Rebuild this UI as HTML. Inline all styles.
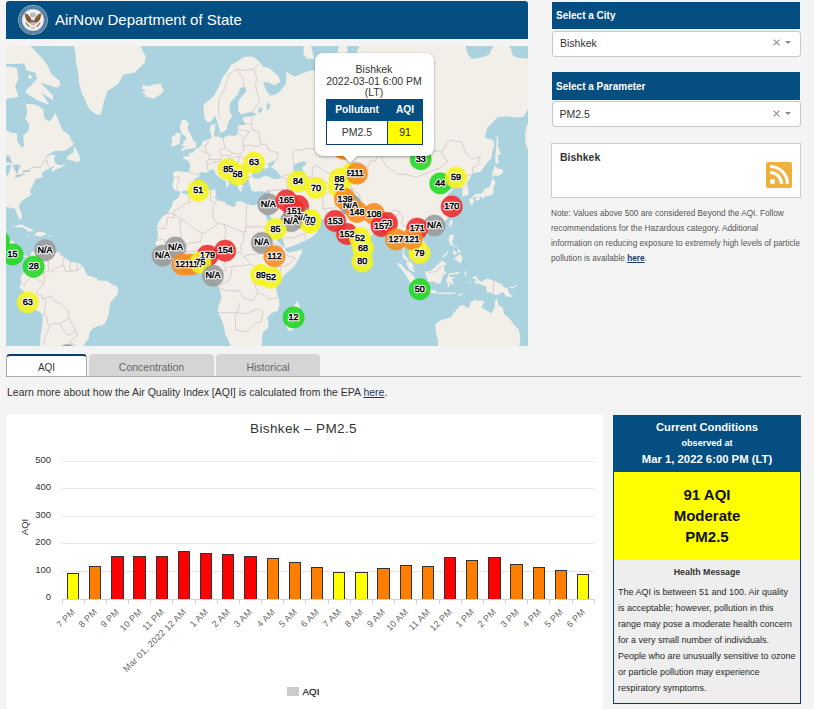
<!DOCTYPE html><html><head><meta charset="utf-8"><style>
html,body{margin:0;padding:0;width:814px;height:709px;overflow:hidden;background:#f4f4f4;font-family:"Liberation Sans", sans-serif;position:relative}
</style></head><body>
<div style="position:absolute;left:6.0px;top:1.0px;width:522.0px;height:38.0px;background:#044e82;border-radius:3px 3px 0 0"></div>
<svg style="position:absolute;left:18px;top:4.8px" width="30" height="30" viewBox="0 0 30 30">
<circle cx="15" cy="15" r="14.9" fill="#8fb8a6"/>
<circle cx="15" cy="15" r="14" fill="#3f6aa3"/>
<circle cx="15" cy="15" r="12.6" fill="none" stroke="#9ab4d4" stroke-width="1.6" stroke-dasharray="0.9 0.9" opacity="0.7"/>
<circle cx="15" cy="15" r="11.2" fill="#a9c4d6"/>
<circle cx="15" cy="15" r="10.6" fill="#f1efe6"/>
<ellipse cx="15" cy="9.8" rx="3" ry="2.4" fill="#a9bfcf"/>
<path d="M6.6 8.2 Q8.2 8.6 9.6 9.2 L11.8 11.5 L13.6 14.8 L13 18.6 Q9.6 17.6 8 14.2 Q7 11.5 6.6 8.2 Z" fill="#7d5635"/>
<path d="M23.4 8.2 Q21.8 8.6 20.4 9.2 L18.2 11.5 L16.4 14.8 L17 18.6 Q20.4 17.6 22 14.2 Q23 11.5 23.4 8.2 Z" fill="#7d5635"/>
<path d="M8 9.5 L10.5 13 M9 9 L11.5 12.5" stroke="#b08a60" stroke-width="0.4"/>
<path d="M22 9.5 L19.5 13 M21 9 L18.5 12.5" stroke="#b08a60" stroke-width="0.4"/>
<path d="M8 17 Q9.5 20 12 21 L11 22 Q8.5 20.5 7.5 18 Z" fill="#5f7a45"/>
<path d="M22 17 Q20.5 20 18 21 L19 22 Q21.5 20.5 22.5 18 Z" fill="#8a6a40"/>
<circle cx="15" cy="13.5" r="1.6" fill="#e8e4da"/>
<path d="M12.6 15.4 L17.4 15.4 L17.4 19.3 Q15 22.2 12.6 19.3 Z" fill="#d98080"/>
<path d="M13.4 17 V20.2 M14.6 17 V21.3 M15.8 17 V21.3 M17 17 V20" stroke="#f4e8e0" stroke-width="0.5"/>
<rect x="12.6" y="15.4" width="4.8" height="1.7" fill="#4a5a8a"/>
<path d="M13 22.5 Q15 24 17 22.5" stroke="#9a8a6a" stroke-width="0.8" fill="none"/>
</svg>
<div style="position:absolute;left:55.0px;top:11.80px;font-size:15.00px;line-height:15.00px;font-weight:normal;color:#fff;white-space:nowrap;">AirNow Department of State</div>
<div style="position:absolute;left:6px;top:46px;width:522px;height:300px;overflow:hidden"><svg width="522" height="300" viewBox="0 0 522 300" style="position:absolute;left:0;top:0">
<rect width="522" height="300" fill="#aad3df"/>
<g fill="#f2efe9" stroke="none">
<polygon points="-26.6,68.0 -26.6,34.4 -16.0,20.6 2.6,20.6 10.5,21.8 12.6,31.6 9.2,40.8 12.6,50.8 3.7,52.2 -9.6,56.9 -16.0,72.2 -10.6,80.3 -1.0,83.4 5.4,86.8 11.1,87.5 11.3,95.2 15.0,101.1 18.2,100.4 17.1,89.8 22.4,84.9 23.3,78.3 19.2,73.1 21.4,65.9 19.9,57.9 27.8,58.3 33.1,60.6 37.4,63.7 38.4,72.2 42.7,75.5 45.9,73.1 49.3,66.7 53.4,77.1 56.6,84.2 63.0,88.7 65.1,93.4 67.9,98.0 64.9,100.7 58.7,104.8 49.5,104.8 44.8,107.1 40.6,109.7 36.3,114.2 34.8,115.8 38.4,112.6 45.0,108.4 49.3,109.4 48.0,112.6 48.5,115.1 50.0,118.2 56.1,119.5 58.7,117.3 59.1,118.5 55.5,121.6 51.2,122.8 46.5,125.7 45.5,123.1 49.3,120.4 45.7,121.0 42.7,122.8 38.4,124.9 35.9,127.2 36.1,131.0 37.4,130.4 37.4,131.2 33.3,132.1 29.3,133.5 28.8,134.4 28.6,136.3 26.9,138.8 26.1,139.9 25.0,143.4 23.9,144.2 25.4,148.4 23.5,150.0 20.7,151.8 18.2,153.6 15.0,156.1 13.0,159.4 13.3,162.1 15.0,165.8 16.0,170.3 15.2,173.4 13.7,173.7 12.2,169.9 10.3,167.5 10.1,164.3 7.9,162.1 6.4,162.1 4.5,162.6 2.2,160.9 -1.0,160.9 -4.2,161.4 -3.8,164.3 -7.4,163.6 -13.8,163.1 -21.3,167.9 -21.3,176.2 -21.3,182.0 -18.1,187.7 -14.9,189.5 -9.6,188.6 -6.4,186.1 -5.9,183.2 -1.0,182.0 1.1,182.0 0.0,185.4 -0.4,189.3 -1.7,190.8 -1.7,194.4 1.1,194.9 6.4,194.6 9.0,196.6 8.6,201.0 8.1,205.4 9.6,207.6 11.8,209.7 13.9,209.7 17.1,208.4 20.7,209.9 22.0,210.6 22.9,211.2 24.6,209.7 25.4,206.3 28.2,205.2 30.3,204.7 33.3,202.3 34.6,203.6 33.3,204.3 33.7,206.5 36.9,204.1 37.8,204.5 41.2,206.3 45.5,206.3 49.7,206.5 53.4,206.0 54.6,206.5 53.2,207.6 57.0,210.8 59.1,211.2 62.3,214.2 64.7,216.2 69.4,216.2 72.6,217.0 75.8,219.4 77.5,220.5 79.0,224.7 80.0,226.9 81.1,229.0 83.2,230.1 85.4,230.3 91.1,232.4 92.2,234.5 97.1,234.8 102.4,235.4 106.7,239.0 111.0,240.1 112.0,244.0 111.6,248.3 107.8,252.6 104.4,257.0 103.5,261.4 102.9,268.0 101.4,272.1 99.2,277.1 96.0,279.4 91.3,280.1 86.4,282.9 83.2,286.7 83.0,291.7 80.5,294.9 78.3,298.6 75.8,301.6 73.6,306.2 73.6,322.2 26.7,322.2 34.2,306.2 34.2,296.1 34.6,288.9 36.3,279.4 36.7,268.7 33.1,265.8 26.1,262.0 23.9,258.1 21.8,254.1 19.2,248.3 16.7,244.0 13.5,241.8 14.1,239.0 15.4,236.3 14.3,233.3 16.0,227.9 18.6,225.8 21.4,223.7 21.8,220.5 21.4,215.1 19.4,211.0 16.7,210.2 15.0,211.9 13.5,213.0 10.7,211.2 7.9,210.2 4.1,208.0 3.7,205.4 0.5,201.2 -2.1,200.6 -7.4,199.1 -10.6,197.7 -16.0,194.4 -26.6,192.2"/>
<polygon points="0.2,-6.3 25.0,0.3 31.8,7.8 37.6,13.7 42.1,20.6 45.5,28.2 53.2,34.4 54.4,38.7 51.0,41.8 34.2,36.5 43.1,45.4 46.5,48.8 47.6,54.6 35.2,46.4 42.1,56.5 43.1,58.8 31.8,54.6 23.9,49.8 19.4,46.4 20.5,43.3 25.0,39.7 30.8,33.3 29.7,27.1 20.5,24.2 18.4,17.5 9.2,18.1 -11.1,18.1 -11.1,-6.3"/>
<polygon points="21.8,29.9 23.9,28.2 26.3,31.1 23.9,33.3"/>
<polygon points="67.2,-1.9 69.4,7.2 70.0,16.9 72.6,28.8 72.8,36.0 75.8,47.4 77.9,51.3 81.1,59.2 84.1,64.1 89.6,68.0 93.0,68.9 95.0,67.6 96.0,63.7 98.2,54.6 101.4,44.9 106.5,41.8 112.0,38.1 117.4,28.8 129.1,26.5 133.4,21.8 138.7,16.9 139.8,10.5 134.4,0.3 139.8,0.3 144.0,-3.3 148.3,-18.8 58.7,-46.4"/>
<polygon points="135.5,42.3 137.6,38.7 140.8,40.2 147.9,38.7 154.7,37.6 155.8,41.3 157.9,44.4 154.7,48.4 150.4,50.8 146.8,52.7 141.9,50.8 138.3,50.8 139.8,48.4 135.5,45.9 139.8,44.4"/>
<polygon points="60.2,113.2 63.0,108.8 67.2,107.1 68.3,100.1 72.6,107.8 74.3,113.6 72.4,116.4 67.7,115.1 61.9,113.6"/>
<polygon points="5.6,181.1 11.8,179.3 15.0,178.3 21.4,181.3 25.4,183.2 28.4,185.0 22.0,185.7 20.7,183.8 17.1,181.8 12.8,181.3 9.6,180.9"/>
<polygon points="28.0,189.1 31.4,185.7 37.4,186.1 40.8,188.6 37.4,189.5 34.2,190.8 31.0,190.0"/>
<polygon points="19.7,189.1 23.9,189.5 22.6,190.4"/>
<polygon points="43.3,188.8 46.8,189.3 43.3,190.2"/>
<polygon points="174.5,105.1 177.7,104.5 180.3,103.1 184.6,102.8 189.7,101.4 190.3,96.6 187.3,95.2 186.7,93.0 185.6,89.8 183.5,86.8 182.2,84.2 181.4,81.8 182.9,78.3 179.9,73.9 176.0,73.9 174.8,78.3 173.5,81.1 175.0,85.3 176.0,88.3 179.2,89.8 180.3,92.0 179.9,94.1 176.7,95.9 177.7,97.6 175.6,99.4 179.9,100.7 177.1,101.4"/>
<polygon points="173.9,98.0 173.9,92.0 175.0,89.8 173.5,87.2 170.7,86.8 168.6,89.4 165.4,90.9 166.4,95.2 164.7,99.0 166.4,100.4 169.6,99.4 173.3,98.0"/>
<polygon points="197.4,59.2 201.6,55.5 208.0,49.8 213.4,39.7 216.6,31.6 220.8,25.9 225.1,18.7 231.5,15.6 237.9,11.1 242.2,10.5 247.5,11.1 252.8,15.0 257.1,20.6 263.5,22.4 272.0,29.4 274.6,35.5 268.8,39.2 260.9,36.0 257.1,36.5 260.3,44.9 264.6,49.8 272.0,47.4 279.5,38.7 280.6,28.8 279.5,25.3 284.8,28.8 289.1,30.5 299.8,25.9 310.4,23.6 314.7,18.1 327.5,21.2 329.6,13.7 332.8,0.3 336.0,-7.0 341.4,0.3 342.4,25.9 345.6,28.8 348.8,10.5 353.1,0.3 378.7,-27.4 421.4,-27.4 427.8,-7.0 442.7,-3.3 451.2,-8.5 455.5,-7.0 459.8,0.3 461.9,8.5 466.2,13.1 472.6,11.8 479.0,10.5 483.2,8.5 487.5,-0.4 491.8,-3.3 500.3,-1.9 504.6,1.7 506.7,9.2 511.0,11.8 521.6,12.4 528.0,16.9 538.7,20.0 538.7,105.5 521.0,102.1 519.5,96.9 519.1,87.9 520.6,80.3 523.8,74.3 527.0,65.9 522.1,62.8 517.4,71.0 511.0,71.4 502.4,70.6 491.8,71.0 486.9,76.3 481.1,82.2 479.0,91.6 475.8,90.5 487.5,94.5 488.3,98.7 486.4,105.5 485.4,112.0 481.1,116.7 474.7,125.7 468.3,126.9 465.5,129.2 463.4,132.9 460.8,137.1 462.7,146.6 462.3,148.7 456.6,150.8 456.1,147.9 456.8,142.6 453.4,141.2 452.5,136.3 447.0,138.5 445.3,139.1 448.0,134.4 444.8,133.2 441.6,136.3 438.0,138.5 439.5,141.2 440.6,143.4 448.2,142.9 443.8,146.3 441.0,150.0 444.6,155.6 446.7,159.4 445.9,161.4 447.0,163.1 443.8,169.1 441.6,172.7 436.3,177.4 429.9,180.2 423.5,182.0 421.8,184.8 420.5,181.8 417.1,182.0 413.9,184.8 412.2,187.9 415.0,192.2 418.8,196.0 419.9,202.1 419.0,204.7 415.0,206.9 414.3,208.6 410.7,210.6 410.3,206.7 406.4,206.0 405.4,202.8 401.9,201.7 401.1,199.9 398.3,203.2 398.5,209.1 400.7,211.4 402.8,214.5 405.4,216.2 407.3,219.4 407.5,223.7 409.0,226.0 407.5,226.2 402.8,223.0 400.7,218.3 400.5,215.1 396.8,211.4 396.4,206.5 397.0,201.0 394.9,193.3 391.5,193.7 388.1,194.4 387.7,188.4 385.1,185.4 383.6,183.2 382.5,180.2 379.8,180.9 376.6,181.6 372.3,182.0 371.2,185.4 367.6,187.3 362.3,193.3 359.5,196.0 357.8,201.0 356.9,206.9 354.2,209.7 352.0,211.7 349.5,208.2 347.6,203.2 345.0,197.1 343.1,191.1 342.0,187.7 341.6,182.5 340.9,180.4 336.9,183.6 333.7,180.2 336.0,179.0 332.8,177.4 330.7,176.7 329.6,174.4 328.6,172.9 324.3,173.4 318.1,173.4 313.6,172.9 308.9,172.0 307.2,168.9 306.8,170.6 307.0,175.1 312.1,177.4 314.3,179.7 310.0,187.7 304.0,192.2 297.6,195.5 290.2,198.8 282.7,201.5 279.5,201.7 279.1,204.3 282.7,206.5 291.2,204.7 296.1,203.6 295.9,206.5 292.9,211.9 289.1,219.4 284.8,223.7 279.5,227.9 275.2,233.3 272.0,236.5 269.9,240.8 270.5,246.1 273.1,252.6 273.3,259.2 272.0,264.7 265.6,266.9 260.9,272.1 262.2,274.8 262.4,281.8 256.9,286.2 256.0,292.5 255.0,322.2 225.1,322.2 225.1,301.1 221.9,292.7 219.3,288.9 217.6,279.0 211.9,265.8 212.7,259.2 215.5,252.6 214.4,246.1 212.3,239.7 209.1,235.4 205.5,231.1 206.5,229.0 207.6,223.7 207.0,220.9 204.8,219.4 199.5,219.8 196.3,215.7 192.0,215.5 188.8,216.2 182.4,218.7 178.2,217.9 170.7,219.6 167.5,218.3 162.2,214.0 159.0,211.4 157.5,208.6 155.8,206.5 153.6,204.3 151.1,203.2 150.9,199.9 149.4,197.3 151.5,193.3 151.9,186.6 150.4,182.5 152.6,176.2 155.8,171.5 158.5,169.1 162.2,166.3 165.8,160.6 166.9,155.6 172.2,151.8 174.1,147.1 173.3,145.3 167.9,143.9 166.4,139.3 167.9,132.9 166.9,127.2 169.6,125.1 178.6,126.0 183.5,125.7 184.1,118.2 182.0,114.8 177.7,112.6 176.7,110.7 183.5,110.0 182.6,106.5 183.9,107.1 187.1,106.5 190.1,102.4 192.0,101.8 195.2,99.4 196.9,95.2 201.6,93.8 205.7,92.0 205.0,88.3 204.0,85.7 204.2,79.9 209.3,77.5 208.9,83.0 207.8,88.7 210.0,91.6 212.3,88.7 214.2,86.4 213.4,82.2 210.6,74.3 209.5,70.1 204.8,75.5 201.6,76.3 198.4,72.2 197.8,65.9"/>
<polygon points="213.2,141.0 220.0,140.4 218.9,144.7 213.2,142.3"/>
<polygon points="204.2,132.9 207.6,132.9 207.2,138.5 204.6,138.5"/>
<polygon points="205.0,127.2 207.0,127.5 207.0,131.8 205.0,130.7"/>
<polygon points="236.8,147.9 242.8,148.4 242.2,149.2 236.8,148.7"/>
<polygon points="255.6,149.2 260.5,147.4 258.8,150.2 255.8,150.0"/>
<polygon points="356.9,208.0 359.5,210.8 361.4,213.6 360.8,215.7 358.4,216.4 357.2,214.5 356.9,210.8"/>
<polygon points="291.9,254.8 294.2,262.5 292.9,265.8 290.2,273.7 287.2,283.9 283.1,285.3 280.1,280.6 279.3,276.0 281.4,272.1 280.6,265.8 285.9,262.9 289.1,258.3"/>
<polygon points="465.9,151.8 469.4,147.9 475.8,147.6 478.5,143.1 483.2,141.2 485.4,135.8 486.4,132.4 488.6,134.4 489.6,137.1 487.5,140.4 487.5,144.7 487.1,147.4 484.9,149.2 482.6,150.0 479.0,150.2 476.8,153.1 474.7,150.5 469.4,151.0 466.6,152.1"/>
<polygon points="463.2,153.1 466.6,152.1 468.3,154.9 466.2,158.9 464.5,158.9 463.6,154.9"/>
<polygon points="468.9,153.8 471.5,151.0 474.1,151.3 473.6,153.3 470.4,155.1"/>
<polygon points="485.4,131.8 486.4,126.6 489.0,120.1 491.8,122.5 496.7,123.4 497.3,126.3 492.8,130.1 487.9,129.2"/>
<polygon points="489.6,118.2 492.8,116.7 491.8,108.8 495.0,108.8 492.2,100.4 492.2,90.9 490.7,90.5 490.1,102.1 489.2,112.0"/>
<polygon points="442.9,178.6 444.2,180.9 445.9,178.1 447.0,173.9 444.8,173.7"/>
<polygon points="418.4,187.7 421.6,185.2 423.5,186.3 421.6,189.5 418.6,188.8"/>
<polygon points="444.0,188.8 447.4,188.8 447.8,192.2 445.9,195.5 447.0,198.8 451.2,201.0 451.2,202.1 448.0,199.9 444.8,199.3 443.8,197.7 442.3,193.7"/>
<polygon points="447.0,214.0 450.2,210.8 454.4,208.0 456.6,211.9 455.5,216.2 454.0,217.0 451.2,215.1 448.7,213.2"/>
<polygon points="451.7,202.1 454.9,205.4 453.4,207.6 451.9,205.4"/>
<polygon points="447.0,203.6 449.5,205.4 451.2,206.0 450.2,208.6 448.0,209.1 447.0,206.5"/>
<polygon points="436.7,211.0 441.6,204.7 442.1,206.5 438.2,211.2"/>
<polygon points="419.2,225.8 420.5,224.7 423.5,225.4 427.8,222.2 431.0,219.0 434.2,216.2 436.7,214.0 437.8,216.0 441.0,217.7 438.4,219.4 438.0,224.7 440.6,226.9 437.4,228.8 436.3,232.2 435.2,235.4 434.2,237.3 431.0,237.5 427.8,235.6 424.6,235.8 421.8,235.2 421.4,232.2 419.7,230.1"/>
<polygon points="390.0,217.0 394.7,217.9 400.0,223.7 403.2,225.4 407.5,230.1 409.6,232.8 412.8,235.4 412.4,241.4 409.6,241.6 404.9,237.5 401.1,231.6 397.3,225.4 394.1,221.7"/>
<polygon points="411.1,243.5 413.9,241.8 417.7,242.5 422.4,243.5 426.7,243.8 431.0,245.5 431.0,247.6 425.6,246.8 419.2,245.7 413.9,244.8"/>
<polygon points="432.0,246.6 440.6,246.6 449.1,246.6 449.1,247.8 440.6,248.1 432.0,247.8"/>
<polygon points="451.2,250.0 454.4,247.4 458.3,247.0 453.8,249.6"/>
<polygon points="441.6,240.8 441.4,236.5 440.1,234.5 442.3,229.0 443.1,227.3 447.0,226.9 453.4,225.8 452.3,228.1 444.8,228.4 443.3,231.1 445.9,231.1 449.7,231.6 445.9,232.8 448.0,238.6 444.8,237.5 443.8,235.0 443.5,241.0"/>
<polygon points="458.7,225.2 460.8,225.8 459.8,227.9 460.8,230.7 458.9,229.6"/>
<polygon points="459.8,235.8 465.7,236.3 463.0,236.7"/>
<polygon points="466.2,232.0 469.4,229.9 474.7,236.0 481.1,232.4 487.5,234.5 496.0,238.2 498.2,241.6 501.4,241.8 502.4,246.1 506.7,251.1 500.3,250.4 497.1,246.1 492.8,248.3 490.7,248.9 487.5,248.5 484.3,246.1 481.1,247.0 480.2,240.8 472.6,237.5 470.0,237.5 468.3,235.0 471.5,233.7 467.2,232.8"/>
<polygon points="503.5,240.8 507.8,240.8 511.0,238.0 510.5,240.1 506.7,242.5 503.5,241.8"/>
<polygon points="429.3,278.3 435.2,273.9 444.8,271.4 447.6,266.9 450.2,264.3 453.4,260.3 457.6,258.7 460.2,261.4 463.4,261.2 464.0,257.0 466.2,255.2 469.4,253.7 470.4,254.4 476.8,254.8 478.5,255.2 476.8,258.1 475.8,261.4 480.0,264.3 485.4,267.4 488.6,261.4 488.8,255.9 490.7,252.0 492.8,259.2 496.7,261.4 498.2,268.0 504.1,273.2 507.8,278.3 513.1,284.1 514.4,292.5 513.1,301.1 513.1,322.2 429.9,322.2 432.0,303.6 432.0,293.7 429.9,286.5"/>
<polygon points="297.6,8.5 300.8,12.4 308.3,13.1 305.1,0.3 308.3,-10.8 297.6,-3.3"/>
</g><g fill="#aad3df">
<polygon points="174.8,146.6 177.1,144.7 182.0,144.7 185.6,142.3 187.1,139.1 186.1,137.1 188.6,132.9 193.5,130.4 193.3,126.9 196.3,126.0 200.6,126.9 203.1,124.9 205.5,123.1 208.5,124.6 209.1,127.5 210.6,128.9 213.6,131.8 216.6,133.5 220.0,135.5 220.2,138.8 220.0,141.2 221.0,141.2 222.1,140.2 223.4,137.4 222.1,135.8 223.4,134.4 226.2,135.5 225.1,133.8 220.8,131.5 217.6,129.8 215.7,125.7 212.9,122.5 212.9,120.1 215.9,119.1 215.7,121.0 217.2,120.4 219.1,123.4 220.6,125.7 224.0,127.2 226.4,128.9 228.1,130.7 228.1,134.6 229.8,137.1 230.9,139.1 231.9,140.4 232.8,143.7 233.4,144.5 234.7,145.5 236.2,145.5 235.3,142.6 236.4,141.2 237.9,140.7 235.1,137.7 236.4,136.0 235.1,134.4 237.5,134.6 238.8,133.2 242.2,133.5 242.8,134.9 243.4,137.7 243.9,139.9 245.2,141.8 244.9,143.9 246.9,144.7 249.6,146.1 252.0,145.0 255.0,145.3 259.4,146.1 260.9,144.5 263.7,144.2 263.3,147.6 262.6,151.3 261.2,155.6 259.7,158.6 255.6,158.9 251.8,158.1 247.5,159.6 241.1,157.9 235.8,155.6 231.5,154.9 229.4,157.4 229.4,159.9 227.2,161.1 224.0,159.4 219.8,157.9 219.1,156.1 214.4,154.9 211.2,153.8 208.5,151.8 210.2,148.4 209.1,145.3 210.2,143.7 208.0,143.4 203.8,144.2 197.4,144.5 191.0,145.0 184.6,147.4 181.4,148.7 175.4,146.8"/>
<polygon points="246.4,130.4 246.2,126.6 247.9,123.4 250.1,120.7 252.2,117.0 254.5,116.4 257.5,117.9 256.0,120.1 258.2,122.8 260.3,122.5 262.4,121.0 264.6,120.4 266.7,122.2 268.8,123.4 271.8,126.0 275.4,131.2 272.0,132.9 267.8,133.2 263.5,131.0 261.4,130.1 257.1,130.4 253.9,132.4 248.8,132.4"/>
<polygon points="261.4,120.1 262.4,117.3 268.2,114.5 268.8,116.4 266.7,119.8 264.6,120.4"/>
<polygon points="287.4,122.8 287.0,120.4 288.2,118.8 290.8,117.6 292.3,117.0 295.9,115.4 299.3,115.4 300.2,117.6 298.7,119.5 296.6,120.7 295.9,122.8 298.7,127.8 299.1,132.4 301.5,133.8 299.6,136.0 301.7,143.1 295.1,143.9 291.2,142.1 291.7,137.7 293.2,134.1 291.4,132.1 288.0,127.2 287.4,123.7"/>
<polygon points="214.2,86.4 217.2,86.0 220.8,83.0 221.9,77.1 226.2,70.6 223.4,64.6 223.8,57.9 227.0,53.2 231.9,48.4 234.3,41.8 239.0,40.8 240.7,44.9 238.3,47.4 232.6,54.6 232.1,65.0 235.3,68.5 241.1,66.7 246.4,65.9 251.1,68.5 246.6,70.1 236.8,71.4 236.8,74.7 238.5,75.5 238.3,79.5 233.6,78.3 231.7,81.1 231.7,85.3 231.9,87.2 229.4,89.8 226.4,90.1 223.0,89.0 217.0,92.0 212.5,90.9 212.3,88.7"/>
<polygon points="256.0,162.1 258.2,166.7 260.3,171.5 263.1,176.7 266.1,183.2 268.8,190.0 271.6,195.5 275.2,198.8 279.1,202.1 277.8,196.6 276.3,192.2 273.7,186.6 270.3,182.0 268.8,176.7 266.1,172.7 262.4,167.5 261.2,163.1 259.9,166.7 257.7,165.5"/>
<polygon points="289.1,161.9 293.4,161.6 296.1,166.7 303.0,170.1 306.8,168.9 307.0,171.1 305.7,173.4 301.9,176.0 297.6,176.5 296.6,174.8 296.6,171.5 295.1,172.7 293.6,170.3 291.7,167.9 290.0,165.5"/>
<polygon points="-9.6,116.1 -3.2,112.0 -1.0,109.4 3.2,109.4 6.4,116.7 1.1,116.7"/>
<polygon points="-0.6,130.1 -0.6,124.3 -1.0,119.8 5.4,118.2 4.3,122.8 2.2,128.7"/>
<polygon points="6.4,119.8 11.8,118.2 15.0,119.8 12.8,122.8 11.1,127.2 8.6,124.3"/>
<polygon points="8.6,131.2 12.8,131.5 18.2,127.8 15.0,128.4 10.7,129.2"/>
<polygon points="16.5,126.3 24.1,125.7 23.5,123.7 17.5,125.1"/>
<polygon points="251.8,65.9 253.9,60.6 256.7,63.7 253.9,67.2"/>
<polygon points="260.3,63.7 261.4,56.0 264.6,59.2 262.4,63.7"/>
<polygon points="408.1,100.1 411.8,96.9 417.1,94.1 420.5,85.3 419.2,84.5 415.0,93.0 410.3,98.7 407.9,99.4"/>
<polygon points="343.5,118.2 347.8,115.8 355.2,116.7 355.2,118.2 347.8,117.3 344.6,118.8"/>
<polygon points="341.4,0.3 342.4,25.9 345.6,28.8 348.8,10.5 353.1,0.3"/>
</g>
<g fill="none" stroke="#a88ba6" stroke-opacity="0.5" stroke-width="0.7" stroke-linejoin="round">
<polyline points="182.0,148.9 183.1,153.1 184.1,156.6 178.8,157.9 176.5,160.6 168.1,164.6 168.1,167.5"/>
<polyline points="158.5,167.5 168.1,167.5"/>
<polyline points="168.1,168.4 168.1,171.5 161.1,171.5 161.1,177.4 159.0,182.5 150.4,182.5"/>
<polyline points="168.1,168.4 176.5,173.9 189.3,183.2 193.7,185.9 195.7,187.3"/>
<polyline points="176.5,173.9 173.9,174.1 175.0,193.3 162.2,195.5 160.7,197.3 162.4,202.3 167.5,203.0 169.6,206.5 170.7,210.8 169.0,213.0 170.7,219.6"/>
<polyline points="151.3,194.0 156.8,193.3 160.7,197.3"/>
<polyline points="151.1,202.3 157.5,201.9 162.4,202.3"/>
<polyline points="158.3,209.7 161.1,207.6 164.3,208.6 162.8,211.2 164.3,214.2"/>
<polyline points="195.7,187.3 199.1,186.8 212.1,177.4 208.0,173.9 207.0,170.3 207.0,161.4 208.5,157.6 204.8,154.9 204.4,150.2 205.0,144.2"/>
<polyline points="208.5,157.6 211.2,154.1"/>
<polyline points="240.5,157.9 240.0,180.9 265.4,180.9"/>
<polyline points="212.1,177.4 218.7,178.6 237.9,186.6 237.9,185.4 240.0,185.4 240.0,180.9"/>
<polyline points="218.7,178.6 219.8,184.3 219.8,190.0 215.7,199.5 213.4,200.8 208.0,200.4 201.6,201.0 195.7,199.9 194.4,203.9 192.7,209.7 192.5,215.5"/>
<polyline points="237.9,186.6 237.7,195.3 234.7,198.8 235.3,203.2 233.6,205.8 226.2,210.2 219.8,213.0 217.6,219.4 220.8,224.7"/>
<polyline points="195.7,187.3 195.7,192.6 194.2,195.7 187.1,196.8 185.6,196.4 182.4,197.7 179.2,200.4 177.3,203.2 175.0,206.7"/>
<polyline points="215.7,199.5 217.6,202.1 215.5,207.6 212.3,211.9 209.1,215.1 205.5,219.2"/>
<polyline points="179.9,218.1 180.9,211.9 180.7,205.4 187.8,205.4 191.4,203.6 194.4,203.9"/>
<polyline points="189.3,216.0 187.8,205.4"/>
<polyline points="233.6,205.8 237.9,210.4 244.3,208.4 250.7,208.2 257.1,207.1 259.2,208.6 257.1,211.9 261.4,218.3 262.4,219.2 269.9,221.5 276.3,220.5 282.7,218.3 289.1,211.9 281.6,209.7 278.4,205.4"/>
<polyline points="268.8,190.0 264.6,198.2 261.4,206.5 259.2,208.6"/>
<polyline points="264.6,198.2 269.9,197.5 275.2,201.0 277.2,202.1"/>
<polyline points="276.1,220.5 274.2,223.0 274.2,232.6"/>
<polyline points="244.9,218.3 237.9,210.4"/>
<polyline points="220.8,221.5 227.2,220.2 234.7,220.0 244.9,218.3 250.7,221.5 250.1,231.8 248.8,238.6 251.8,246.6 246.4,254.8 237.9,252.6 233.2,244.6 220.8,245.0 212.9,241.8"/>
<polyline points="212.9,239.7 221.9,235.4 224.7,230.1 225.5,224.1 226.4,221.5"/>
<polyline points="207.6,224.1 210.8,224.3 215.1,224.3 220.8,224.7"/>
<polyline points="259.2,220.0 261.4,225.8 259.2,231.1 270.3,239.0"/>
<polyline points="250.7,231.1 259.2,231.1"/>
<polyline points="272.9,251.5 262.4,253.7 259.2,249.4 251.8,246.6"/>
<polyline points="233.6,257.0 231.1,266.9 211.9,266.5"/>
<polyline points="229.4,268.0 229.4,277.1 229.4,283.6 240.0,286.0 248.6,277.6 255.0,276.0 257.1,265.8 251.8,262.7 240.5,267.6 231.1,266.9"/>
<polyline points="263.5,146.8 265.0,144.5 268.2,144.2 273.1,143.7 276.9,143.4 282.3,143.4 281.2,140.4 281.2,136.9 279.7,134.4 277.6,131.5 275.4,131.5"/>
<polyline points="282.3,143.4 283.8,147.9 284.8,153.1 288.0,156.9 289.1,160.6 290.2,162.1"/>
<polyline points="276.9,143.4 274.8,150.5 269.5,153.3 270.3,156.4 265.6,158.1 267.8,161.1 264.6,163.1 261.4,163.3"/>
<polyline points="263.5,154.9 262.6,153.6"/>
<polyline points="270.3,156.4 276.3,159.1 282.1,163.8 285.9,164.1 289.1,165.5"/>
<polyline points="278.0,193.5 280.6,191.3 287.0,192.2 297.6,187.7 305.3,185.4 304.5,179.3 298.7,175.8 295.9,175.5"/>
<polyline points="297.6,187.7 300.0,193.1"/>
<polyline points="304.5,179.3 306.6,175.5"/>
<polyline points="301.7,143.1 308.3,141.2 315.6,145.0 317.3,147.6 316.4,151.0 317.7,158.6 316.6,162.4 320.7,166.0 318.5,171.8 318.1,173.4"/>
<polyline points="316.6,162.4 328.1,162.1 334.5,157.1 337.7,152.1 339.2,146.3 345.8,143.7"/>
<polyline points="317.3,147.6 321.3,147.1 324.9,143.7 331.3,143.4 336.0,142.3 339.2,141.5 346.5,143.4"/>
<polyline points="345.8,143.7 347.8,150.5 345.2,154.9 345.8,159.4 342.4,162.1 338.6,167.2 336.0,170.3 338.2,175.3 332.2,176.9"/>
<polyline points="346.5,143.4 352.7,147.9 355.7,155.6 354.8,158.9 357.8,161.1 359.7,161.9 365.9,165.3 374.6,167.0 377.6,166.5 383.0,167.2 388.9,163.8 394.3,166.3 396.2,169.1 396.8,173.9 395.1,176.5 399.0,180.6 402.6,182.5 404.7,179.9 410.7,178.1 414.3,179.0 417.1,182.0"/>
<polyline points="357.8,161.1 360.6,165.5 364.8,168.2 370.2,170.1 374.6,170.3 374.6,167.0"/>
<polyline points="374.6,170.3 376.6,171.1 383.0,173.7 384.2,180.9 376.6,180.9"/>
<polyline points="394.3,166.3 389.8,169.9 388.3,176.2 385.7,178.6 384.2,182.0"/>
<polyline points="402.6,182.5 400.2,184.5 396.8,186.1 395.3,189.7 397.0,194.4 398.1,206.9"/>
<polyline points="404.7,179.9 408.6,183.6 411.1,188.6 414.3,193.3 416.0,197.7 412.8,204.3 409.6,206.7"/>
<polyline points="400.2,184.5 402.8,190.6 405.8,190.2 410.3,193.3 411.8,198.2 406.4,198.2 405.4,202.8"/>
<polyline points="400.5,215.1 404.5,215.7"/>
<polyline points="288.0,119.1 287.0,112.0 285.9,108.8 290.8,103.8 295.5,103.8 303.0,102.1 306.2,103.1 311.5,102.8 317.9,100.4 316.8,95.2 317.9,91.6 325.4,89.4 333.9,86.8 338.2,91.2 343.5,93.4 349.9,90.9 353.1,96.9 361.6,102.1 368.0,107.1 372.9,108.4 374.0,108.1 378.7,103.5 384.0,103.1 394.7,105.5 396.8,98.7 404.3,100.7 412.8,104.5 418.2,107.4 429.9,104.8 435.7,106.1 441.6,96.9 444.8,94.1 455.5,95.9 459.8,107.1 466.2,112.9 474.3,110.7 471.5,119.8 466.2,121.9 467.2,128.7 465.5,129.2"/>
<polyline points="374.0,108.1 379.8,119.8 391.5,128.1 400.0,128.4 410.7,131.2 424.6,125.4 434.2,121.9 442.1,115.1 438.4,112.6 435.7,106.1"/>
<polyline points="372.9,108.4 369.1,115.1 363.8,115.1 362.7,120.4 357.4,121.3 357.8,127.8 357.8,130.1 348.8,134.4 343.7,137.4 346.5,143.4"/>
<polyline points="357.8,127.8 355.7,127.8 345.0,126.6 338.2,129.2 335.0,131.5 327.5,128.4 319.0,125.7 311.5,119.8 306.2,121.3 306.2,132.1 299.8,129.8"/>
<polyline points="306.2,132.1 315.8,132.4 319.8,136.0 326.4,142.6"/>
<polyline points="353.7,132.7 343.7,137.4 337.1,136.3 332.8,137.1 331.3,143.4"/>
<polyline points="338.2,129.2 339.2,132.9 342.4,133.5 343.7,137.4"/>
<polyline points="275.4,131.5 279.5,128.7 285.9,130.7 290.2,130.7"/>
<polyline points="279.5,132.7 282.7,132.4 285.9,132.7"/>
<polyline points="282.3,136.6 285.9,138.8 289.1,137.1 290.8,140.2"/>
<polyline points="465.5,129.2 461.9,128.7 459.8,130.4 456.6,131.5 451.9,135.8"/>
<polyline points="457.0,141.8 460.6,139.6"/>
<polyline points="420.5,224.7 423.5,226.9 427.8,225.8 431.0,225.8 433.1,221.5 437.4,220.0"/>
<polyline points="487.5,234.5 487.5,248.5"/>
<polyline points="213.4,72.2 212.3,63.7 213.4,52.2 218.7,42.3 223.0,28.8 230.4,23.0 236.8,31.6 238.1,40.8"/>
<polyline points="230.4,23.0 240.0,24.7 247.5,23.0 252.8,18.1"/>
<polyline points="247.5,23.0 250.7,31.6 249.6,39.7 251.8,49.8 253.9,55.5 246.0,65.9"/>
<polyline points="246.4,70.6 245.4,78.3 246.9,84.2 252.8,85.7 253.9,95.2 255.0,98.3 260.3,98.0 262.4,103.8 267.8,105.5 272.0,106.8 271.4,112.6 268.2,114.8"/>
<polyline points="233.2,77.9 244.9,77.9"/>
<polyline points="231.7,83.8 243.4,85.3 239.0,91.6 236.8,92.0 237.3,98.7 237.9,103.8 235.1,108.4"/>
<polyline points="235.3,90.1 231.5,86.8"/>
<polyline points="237.3,100.1 242.2,99.0 251.8,100.7 255.0,98.3"/>
<polyline points="217.0,92.0 217.8,96.6 218.7,102.1 222.5,104.5 226.8,107.1 230.4,107.4 235.1,108.4"/>
<polyline points="212.7,104.5 217.2,102.4 218.7,102.1"/>
<polyline points="212.7,104.5 216.1,109.4 214.4,113.6 209.1,113.6 207.2,113.6 202.9,113.2 204.2,108.8 200.4,107.1 199.7,102.8 199.5,99.4 201.6,98.0 202.1,94.5"/>
<polyline points="200.4,107.1 196.9,105.5 192.0,101.8"/>
<polyline points="195.9,100.7 199.5,99.4"/>
<polyline points="202.9,113.2 199.5,117.6 201.6,118.5 201.6,123.7 202.7,124.9"/>
<polyline points="182.9,126.0 188.2,127.8 193.5,128.9"/>
<polyline points="167.7,130.4 173.5,131.2 172.0,135.8 171.1,139.9 170.9,143.4"/>
<polyline points="201.6,118.5 204.8,117.0 209.1,116.7 212.7,115.1 215.9,116.7 215.9,119.5"/>
<polyline points="207.0,113.6 209.1,115.8"/>
<polyline points="216.1,109.4 218.7,108.8 222.8,110.0 223.2,112.0 221.9,116.7 215.9,116.7"/>
<polyline points="222.8,110.0 226.8,107.1"/>
<polyline points="223.2,112.0 226.8,112.6 230.4,110.4 234.1,110.7 231.5,117.6 227.2,118.5 223.0,118.8 221.9,116.7"/>
<polyline points="234.1,110.7 239.0,112.3 243.4,111.0 246.4,116.7 246.9,119.8 250.1,120.7"/>
<polyline points="243.4,111.0 247.5,111.3 250.7,116.7 246.9,119.8"/>
<polyline points="235.1,123.7 240.0,125.1 245.4,124.3 247.7,125.1"/>
<polyline points="231.5,117.6 230.0,119.1 232.6,122.2 235.1,123.7 234.5,129.2 237.9,131.5 242.8,131.0 246.4,130.1"/>
<polyline points="242.8,131.0 242.2,133.5"/>
<polyline points="230.4,136.3 231.5,133.2 235.8,132.1 237.9,131.5"/>
<polyline points="220.8,120.7 227.2,121.3 228.3,126.6 226.2,128.7"/>
<polyline points="220.4,121.9 223.0,125.7 226.2,128.7"/>
<polyline points="228.1,130.4 230.4,128.7 232.6,129.5 234.5,129.2"/>
<polyline points="230.4,128.7 230.6,132.9 230.4,136.3"/>
<polyline points="-4.2,112.0 -1.0,111.3 6.4,116.7 10.9,120.4 10.7,128.7 9.4,130.1 18.2,128.4 17.1,125.4 23.5,124.3 26.7,121.3 34.2,121.3 36.3,118.2 39.1,113.9 41.2,114.2 42.1,119.5 43.8,121.0"/>
<polyline points="-10.0,197.7 -9.6,194.4 -8.3,194.4 -6.4,194.2 -8.3,191.5 -3.6,190.4 -1.7,188.8"/>
<polyline points="-3.6,190.4 -3.6,194.6"/>
<polyline points="9.2,196.6 4.3,198.8 0.5,201.2"/>
<polyline points="8.1,205.6 3.9,205.2"/>
<polyline points="10.5,208.4 9.8,211.7"/>
<polyline points="21.6,210.4 20.5,213.6"/>
<polyline points="-3.8,198.0 -2.1,194.9"/>
<polyline points="-3.8,198.0 -0.4,199.3"/>
<polyline points="32.7,203.4 32.0,205.4 30.3,209.3 32.2,211.9 32.2,214.0 37.4,214.0 42.7,215.7 42.1,219.4 43.1,224.7 37.4,226.2 38.4,231.1 37.6,238.0"/>
<polyline points="18.6,226.0 22.4,228.4 26.1,229.2 29.9,232.2 37.4,238.0"/>
<polyline points="15.6,236.3 18.2,239.7 19.9,236.0 26.1,229.2"/>
<polyline points="58.7,210.8 56.6,217.2 57.6,219.4 52.3,220.9 49.1,222.6 44.2,226.4"/>
<polyline points="64.7,216.2 63.6,221.5 65.1,224.9"/>
<polyline points="71.5,216.8 71.1,224.5"/>
<polyline points="57.6,219.4 59.8,225.8 65.1,224.9 71.1,224.5 76.4,220.0"/>
<polyline points="37.6,238.0 31.0,244.6 31.4,248.9 36.1,249.4 36.1,252.6 38.4,252.6 40.1,255.9 38.4,262.5 38.4,266.9 36.5,268.7"/>
<polyline points="38.4,266.9 40.6,271.4 41.6,277.1 43.8,279.4 41.0,286.5 38.4,293.7 37.4,301.1"/>
<polyline points="38.4,252.6 45.9,250.0 48.0,254.8 55.5,258.1 58.1,261.6 62.1,264.3 63.0,272.1 53.8,277.6 48.0,277.4 43.8,279.4"/>
<polyline points="63.0,272.1 66.2,277.8 68.3,281.8 70.2,285.3 61.9,289.3 57.6,284.1 53.8,277.6"/>
<polyline points="70.2,285.3 71.9,289.3 67.2,292.5 63.8,296.6 68.3,298.4 72.8,305.4"/>
</g>
<g>
<circle cx="-7.0" cy="195.0" r="10.7" fill="#1ed81e" fill-opacity="0.88" stroke="#1ed81e" stroke-opacity="0.3" stroke-width="1.2"/>
<circle cx="6.6" cy="208.5" r="10.7" fill="#1ed81e" fill-opacity="0.88" stroke="#1ed81e" stroke-opacity="0.3" stroke-width="1.2"/>
<circle cx="39.1" cy="204.2" r="10.7" fill="#9a9a9a" fill-opacity="0.88" stroke="#9a9a9a" stroke-opacity="0.3" stroke-width="1.2"/>
<circle cx="27.7" cy="220.8" r="10.7" fill="#1ed81e" fill-opacity="0.88" stroke="#1ed81e" stroke-opacity="0.3" stroke-width="1.2"/>
<circle cx="21.7" cy="256.3" r="10.7" fill="#f5f51a" fill-opacity="0.88" stroke="#f5f51a" stroke-opacity="0.3" stroke-width="1.2"/>
<circle cx="61.7" cy="309.0" r="10.7" fill="#9a9a9a" fill-opacity="0.88" stroke="#9a9a9a" stroke-opacity="0.3" stroke-width="1.2"/>
<circle cx="169.4" cy="201.5" r="10.7" fill="#9a9a9a" fill-opacity="0.88" stroke="#9a9a9a" stroke-opacity="0.3" stroke-width="1.2"/>
<circle cx="156.6" cy="209.8" r="10.7" fill="#9a9a9a" fill-opacity="0.88" stroke="#9a9a9a" stroke-opacity="0.3" stroke-width="1.2"/>
<circle cx="176.5" cy="218.5" r="10.7" fill="#f98a1a" fill-opacity="0.88" stroke="#f98a1a" stroke-opacity="0.3" stroke-width="1.2"/>
<circle cx="185.0" cy="218.5" r="10.7" fill="#f98a1a" fill-opacity="0.88" stroke="#f98a1a" stroke-opacity="0.3" stroke-width="1.2"/>
<circle cx="201.5" cy="209.8" r="10.7" fill="#ee2a2a" fill-opacity="0.88" stroke="#ee2a2a" stroke-opacity="0.3" stroke-width="1.2"/>
<circle cx="194.4" cy="216.5" r="10.7" fill="#f5f51a" fill-opacity="0.88" stroke="#f5f51a" stroke-opacity="0.3" stroke-width="1.2"/>
<circle cx="219.2" cy="204.8" r="10.7" fill="#ee2a2a" fill-opacity="0.88" stroke="#ee2a2a" stroke-opacity="0.3" stroke-width="1.2"/>
<circle cx="207.0" cy="229.7" r="10.7" fill="#9a9a9a" fill-opacity="0.88" stroke="#9a9a9a" stroke-opacity="0.3" stroke-width="1.2"/>
<circle cx="192.3" cy="144.8" r="10.7" fill="#f5f51a" fill-opacity="0.88" stroke="#f5f51a" stroke-opacity="0.3" stroke-width="1.2"/>
<circle cx="231.6" cy="128.6" r="10.7" fill="#f5f51a" fill-opacity="0.88" stroke="#f5f51a" stroke-opacity="0.3" stroke-width="1.2"/>
<circle cx="222.2" cy="123.3" r="10.7" fill="#f5f51a" fill-opacity="0.88" stroke="#f5f51a" stroke-opacity="0.3" stroke-width="1.2"/>
<circle cx="248.0" cy="116.8" r="10.7" fill="#f5f51a" fill-opacity="0.88" stroke="#f5f51a" stroke-opacity="0.3" stroke-width="1.2"/>
<circle cx="292.0" cy="135.5" r="10.7" fill="#f5f51a" fill-opacity="0.88" stroke="#f5f51a" stroke-opacity="0.3" stroke-width="1.2"/>
<circle cx="310.0" cy="142.0" r="10.7" fill="#f5f51a" fill-opacity="0.88" stroke="#f5f51a" stroke-opacity="0.3" stroke-width="1.2"/>
<circle cx="262.3" cy="158.3" r="10.7" fill="#9a9a9a" fill-opacity="0.88" stroke="#9a9a9a" stroke-opacity="0.3" stroke-width="1.2"/>
<circle cx="280.4" cy="154.5" r="10.7" fill="#ee2a2a" fill-opacity="0.88" stroke="#ee2a2a" stroke-opacity="0.3" stroke-width="1.2"/>
<circle cx="292.0" cy="160.0" r="10.7" fill="#ee2a2a" fill-opacity="0.88" stroke="#ee2a2a" stroke-opacity="0.3" stroke-width="1.2"/>
<circle cx="295.5" cy="171.5" r="10.7" fill="#9a9a9a" fill-opacity="0.88" stroke="#9a9a9a" stroke-opacity="0.3" stroke-width="1.2"/>
<circle cx="288.3" cy="165.0" r="10.7" fill="#ee2a2a" fill-opacity="0.88" stroke="#ee2a2a" stroke-opacity="0.3" stroke-width="1.2"/>
<circle cx="304.0" cy="176.5" r="10.7" fill="#f5f51a" fill-opacity="0.88" stroke="#f5f51a" stroke-opacity="0.3" stroke-width="1.2"/>
<circle cx="304.5" cy="174.0" r="10.7" fill="#f5f51a" fill-opacity="0.88" stroke="#f5f51a" stroke-opacity="0.3" stroke-width="1.2"/>
<circle cx="285.1" cy="175.1" r="10.7" fill="#9a9a9a" fill-opacity="0.88" stroke="#9a9a9a" stroke-opacity="0.3" stroke-width="1.2"/>
<circle cx="269.6" cy="183.0" r="10.7" fill="#f5f51a" fill-opacity="0.88" stroke="#f5f51a" stroke-opacity="0.3" stroke-width="1.2"/>
<circle cx="255.8" cy="196.9" r="10.7" fill="#9a9a9a" fill-opacity="0.88" stroke="#9a9a9a" stroke-opacity="0.3" stroke-width="1.2"/>
<circle cx="268.5" cy="210.2" r="10.7" fill="#f98a1a" fill-opacity="0.88" stroke="#f98a1a" stroke-opacity="0.3" stroke-width="1.2"/>
<circle cx="255.0" cy="229.0" r="10.7" fill="#f5f51a" fill-opacity="0.88" stroke="#f5f51a" stroke-opacity="0.3" stroke-width="1.2"/>
<circle cx="265.0" cy="231.8" r="10.7" fill="#f5f51a" fill-opacity="0.88" stroke="#f5f51a" stroke-opacity="0.3" stroke-width="1.2"/>
<circle cx="287.6" cy="271.4" r="10.7" fill="#1ed81e" fill-opacity="0.88" stroke="#1ed81e" stroke-opacity="0.3" stroke-width="1.2"/>
<circle cx="338.0" cy="103.0" r="10.7" fill="#f98a1a" fill-opacity="0.88" stroke="#f98a1a" stroke-opacity="0.3" stroke-width="1.2"/>
<circle cx="333.5" cy="133.0" r="10.7" fill="#f5f51a" fill-opacity="0.88" stroke="#f5f51a" stroke-opacity="0.3" stroke-width="1.2"/>
<circle cx="333.0" cy="141.0" r="10.7" fill="#f5f51a" fill-opacity="0.88" stroke="#f5f51a" stroke-opacity="0.3" stroke-width="1.2"/>
<circle cx="345.8" cy="127.6" r="10.7" fill="#f5f51a" fill-opacity="0.88" stroke="#f5f51a" stroke-opacity="0.3" stroke-width="1.2"/>
<circle cx="351.0" cy="127.6" r="10.7" fill="#f98a1a" fill-opacity="0.88" stroke="#f98a1a" stroke-opacity="0.3" stroke-width="1.2"/>
<circle cx="344.5" cy="159.0" r="10.7" fill="#9a9a9a" fill-opacity="0.88" stroke="#9a9a9a" stroke-opacity="0.3" stroke-width="1.2"/>
<circle cx="338.9" cy="153.0" r="10.7" fill="#f98a1a" fill-opacity="0.88" stroke="#f98a1a" stroke-opacity="0.3" stroke-width="1.2"/>
<circle cx="351.0" cy="166.0" r="10.7" fill="#f98a1a" fill-opacity="0.88" stroke="#f98a1a" stroke-opacity="0.3" stroke-width="1.2"/>
<circle cx="368.0" cy="168.0" r="10.7" fill="#f98a1a" fill-opacity="0.88" stroke="#f98a1a" stroke-opacity="0.3" stroke-width="1.2"/>
<circle cx="329.2" cy="175.0" r="10.7" fill="#ee2a2a" fill-opacity="0.88" stroke="#ee2a2a" stroke-opacity="0.3" stroke-width="1.2"/>
<circle cx="381.0" cy="177.0" r="10.7" fill="#ee2a2a" fill-opacity="0.88" stroke="#ee2a2a" stroke-opacity="0.3" stroke-width="1.2"/>
<circle cx="375.5" cy="180.0" r="10.7" fill="#ee2a2a" fill-opacity="0.88" stroke="#ee2a2a" stroke-opacity="0.3" stroke-width="1.2"/>
<circle cx="341.0" cy="188.0" r="10.7" fill="#ee2a2a" fill-opacity="0.88" stroke="#ee2a2a" stroke-opacity="0.3" stroke-width="1.2"/>
<circle cx="354.0" cy="192.0" r="10.7" fill="#f5f51a" fill-opacity="0.88" stroke="#f5f51a" stroke-opacity="0.3" stroke-width="1.2"/>
<circle cx="357.0" cy="202.0" r="10.7" fill="#f5f51a" fill-opacity="0.88" stroke="#f5f51a" stroke-opacity="0.3" stroke-width="1.2"/>
<circle cx="356.3" cy="215.5" r="10.7" fill="#f5f51a" fill-opacity="0.88" stroke="#f5f51a" stroke-opacity="0.3" stroke-width="1.2"/>
<circle cx="428.4" cy="179.6" r="10.7" fill="#9a9a9a" fill-opacity="0.88" stroke="#9a9a9a" stroke-opacity="0.3" stroke-width="1.2"/>
<circle cx="411.2" cy="182.6" r="10.7" fill="#ee2a2a" fill-opacity="0.88" stroke="#ee2a2a" stroke-opacity="0.3" stroke-width="1.2"/>
<circle cx="390.0" cy="193.4" r="10.7" fill="#f98a1a" fill-opacity="0.88" stroke="#f98a1a" stroke-opacity="0.3" stroke-width="1.2"/>
<circle cx="413.6" cy="207.0" r="10.7" fill="#f5f51a" fill-opacity="0.88" stroke="#f5f51a" stroke-opacity="0.3" stroke-width="1.2"/>
<circle cx="406.0" cy="193.0" r="10.7" fill="#f98a1a" fill-opacity="0.88" stroke="#f98a1a" stroke-opacity="0.3" stroke-width="1.2"/>
<circle cx="413.7" cy="243.3" r="10.7" fill="#1ed81e" fill-opacity="0.88" stroke="#1ed81e" stroke-opacity="0.3" stroke-width="1.2"/>
<circle cx="445.7" cy="160.5" r="10.7" fill="#ee2a2a" fill-opacity="0.88" stroke="#ee2a2a" stroke-opacity="0.3" stroke-width="1.2"/>
<circle cx="434.3" cy="137.4" r="10.7" fill="#1ed81e" fill-opacity="0.88" stroke="#1ed81e" stroke-opacity="0.3" stroke-width="1.2"/>
<circle cx="450.0" cy="131.6" r="10.7" fill="#f5f51a" fill-opacity="0.88" stroke="#f5f51a" stroke-opacity="0.3" stroke-width="1.2"/>
<circle cx="414.7" cy="113.3" r="10.7" fill="#1ed81e" fill-opacity="0.88" stroke="#1ed81e" stroke-opacity="0.3" stroke-width="1.2"/>
</g><g font-family="Liberation Sans" font-size="9.8" text-anchor="middle" fill="#0a0a0a" stroke="#fff" stroke-width="2.6" stroke-linejoin="round">
<g transform="translate(6.60,211.00) scale(0.92,1)"><text x="0" y="0">15</text><text x="0" y="0" stroke="#000" stroke-width="0.5">15</text></g>
<g transform="translate(39.10,206.70) scale(0.92,1)"><text x="0" y="0">N/A</text><text x="0" y="0" stroke="#000" stroke-width="0.5">N/A</text></g>
<g transform="translate(27.70,223.30) scale(0.92,1)"><text x="0" y="0">28</text><text x="0" y="0" stroke="#000" stroke-width="0.5">28</text></g>
<g transform="translate(21.70,258.80) scale(0.92,1)"><text x="0" y="0">63</text><text x="0" y="0" stroke="#000" stroke-width="0.5">63</text></g>
<g transform="translate(169.40,204.00) scale(0.92,1)"><text x="0" y="0">N/A</text><text x="0" y="0" stroke="#000" stroke-width="0.5">N/A</text></g>
<g transform="translate(156.60,212.30) scale(0.92,1)"><text x="0" y="0">N/A</text><text x="0" y="0" stroke="#000" stroke-width="0.5">N/A</text></g>
<g transform="translate(176.50,221.00) scale(0.92,1)"><text x="0" y="0">121</text><text x="0" y="0" stroke="#000" stroke-width="0.5">121</text></g>
<g transform="translate(190.00,221.00) scale(0.92,1)"><text x="0" y="0">117</text><text x="0" y="0" stroke="#000" stroke-width="0.5">117</text></g>
<g transform="translate(201.50,212.30) scale(0.92,1)"><text x="0" y="0">179</text><text x="0" y="0" stroke="#000" stroke-width="0.5">179</text></g>
<g transform="translate(194.40,219.00) scale(0.92,1)"><text x="0" y="0">75</text><text x="0" y="0" stroke="#000" stroke-width="0.5">75</text></g>
<g transform="translate(219.20,207.30) scale(0.92,1)"><text x="0" y="0">154</text><text x="0" y="0" stroke="#000" stroke-width="0.5">154</text></g>
<g transform="translate(207.00,232.20) scale(0.92,1)"><text x="0" y="0">N/A</text><text x="0" y="0" stroke="#000" stroke-width="0.5">N/A</text></g>
<g transform="translate(192.30,147.30) scale(0.92,1)"><text x="0" y="0">51</text><text x="0" y="0" stroke="#000" stroke-width="0.5">51</text></g>
<g transform="translate(231.60,131.10) scale(0.92,1)"><text x="0" y="0">58</text><text x="0" y="0" stroke="#000" stroke-width="0.5">58</text></g>
<g transform="translate(222.20,125.80) scale(0.92,1)"><text x="0" y="0">85</text><text x="0" y="0" stroke="#000" stroke-width="0.5">85</text></g>
<g transform="translate(248.00,119.30) scale(0.92,1)"><text x="0" y="0">63</text><text x="0" y="0" stroke="#000" stroke-width="0.5">63</text></g>
<g transform="translate(292.00,138.00) scale(0.92,1)"><text x="0" y="0">84</text><text x="0" y="0" stroke="#000" stroke-width="0.5">84</text></g>
<g transform="translate(310.00,144.50) scale(0.92,1)"><text x="0" y="0">70</text><text x="0" y="0" stroke="#000" stroke-width="0.5">70</text></g>
<g transform="translate(262.30,160.80) scale(0.92,1)"><text x="0" y="0">N/A</text><text x="0" y="0" stroke="#000" stroke-width="0.5">N/A</text></g>
<g transform="translate(280.40,157.00) scale(0.92,1)"><text x="0" y="0">165</text><text x="0" y="0" stroke="#000" stroke-width="0.5">165</text></g>
<g transform="translate(295.50,174.00) scale(0.92,1)"><text x="0" y="0">N/A</text><text x="0" y="0" stroke="#000" stroke-width="0.5">N/A</text></g>
<g transform="translate(288.30,167.50) scale(0.92,1)"><text x="0" y="0">151</text><text x="0" y="0" stroke="#000" stroke-width="0.5">151</text></g>
<g transform="translate(304.00,179.00) scale(0.92,1)"><text x="0" y="0">60</text><text x="0" y="0" stroke="#000" stroke-width="0.5">60</text></g>
<g transform="translate(304.50,176.50) scale(0.92,1)"><text x="0" y="0">70</text><text x="0" y="0" stroke="#000" stroke-width="0.5">70</text></g>
<g transform="translate(285.10,177.60) scale(0.92,1)"><text x="0" y="0">N/A</text><text x="0" y="0" stroke="#000" stroke-width="0.5">N/A</text></g>
<g transform="translate(269.60,185.50) scale(0.92,1)"><text x="0" y="0">85</text><text x="0" y="0" stroke="#000" stroke-width="0.5">85</text></g>
<g transform="translate(255.80,199.40) scale(0.92,1)"><text x="0" y="0">N/A</text><text x="0" y="0" stroke="#000" stroke-width="0.5">N/A</text></g>
<g transform="translate(268.50,212.70) scale(0.92,1)"><text x="0" y="0">112</text><text x="0" y="0" stroke="#000" stroke-width="0.5">112</text></g>
<g transform="translate(255.00,231.50) scale(0.92,1)"><text x="0" y="0">89</text><text x="0" y="0" stroke="#000" stroke-width="0.5">89</text></g>
<g transform="translate(265.00,234.30) scale(0.92,1)"><text x="0" y="0">52</text><text x="0" y="0" stroke="#000" stroke-width="0.5">52</text></g>
<g transform="translate(287.60,273.90) scale(0.92,1)"><text x="0" y="0">12</text><text x="0" y="0" stroke="#000" stroke-width="0.5">12</text></g>
<g transform="translate(333.50,135.50) scale(0.92,1)"><text x="0" y="0">88</text><text x="0" y="0" stroke="#000" stroke-width="0.5">88</text></g>
<g transform="translate(333.00,143.50) scale(0.92,1)"><text x="0" y="0">72</text><text x="0" y="0" stroke="#000" stroke-width="0.5">72</text></g>
<g transform="translate(345.80,130.10) scale(0.92,1)"><text x="0" y="0">91</text><text x="0" y="0" stroke="#000" stroke-width="0.5">91</text></g>
<g transform="translate(351.00,130.10) scale(0.92,1)"><text x="0" y="0">111</text><text x="0" y="0" stroke="#000" stroke-width="0.5">111</text></g>
<g transform="translate(344.50,161.50) scale(0.92,1)"><text x="0" y="0">N/A</text><text x="0" y="0" stroke="#000" stroke-width="0.5">N/A</text></g>
<g transform="translate(338.90,155.50) scale(0.92,1)"><text x="0" y="0">139</text><text x="0" y="0" stroke="#000" stroke-width="0.5">139</text></g>
<g transform="translate(351.00,168.50) scale(0.92,1)"><text x="0" y="0">148</text><text x="0" y="0" stroke="#000" stroke-width="0.5">148</text></g>
<g transform="translate(368.00,170.50) scale(0.92,1)"><text x="0" y="0">108</text><text x="0" y="0" stroke="#000" stroke-width="0.5">108</text></g>
<g transform="translate(329.20,177.50) scale(0.92,1)"><text x="0" y="0">153</text><text x="0" y="0" stroke="#000" stroke-width="0.5">153</text></g>
<g transform="translate(381.00,179.50) scale(0.92,1)"><text x="0" y="0">53</text><text x="0" y="0" stroke="#000" stroke-width="0.5">53</text></g>
<g transform="translate(375.50,182.50) scale(0.92,1)"><text x="0" y="0">157</text><text x="0" y="0" stroke="#000" stroke-width="0.5">157</text></g>
<g transform="translate(341.00,190.50) scale(0.92,1)"><text x="0" y="0">152</text><text x="0" y="0" stroke="#000" stroke-width="0.5">152</text></g>
<g transform="translate(354.00,194.50) scale(0.92,1)"><text x="0" y="0">52</text><text x="0" y="0" stroke="#000" stroke-width="0.5">52</text></g>
<g transform="translate(357.00,204.50) scale(0.92,1)"><text x="0" y="0">68</text><text x="0" y="0" stroke="#000" stroke-width="0.5">68</text></g>
<g transform="translate(356.30,218.00) scale(0.92,1)"><text x="0" y="0">80</text><text x="0" y="0" stroke="#000" stroke-width="0.5">80</text></g>
<g transform="translate(428.40,182.10) scale(0.92,1)"><text x="0" y="0">N/A</text><text x="0" y="0" stroke="#000" stroke-width="0.5">N/A</text></g>
<g transform="translate(411.20,185.10) scale(0.92,1)"><text x="0" y="0">171</text><text x="0" y="0" stroke="#000" stroke-width="0.5">171</text></g>
<g transform="translate(390.00,195.90) scale(0.92,1)"><text x="0" y="0">127</text><text x="0" y="0" stroke="#000" stroke-width="0.5">127</text></g>
<g transform="translate(413.60,209.50) scale(0.92,1)"><text x="0" y="0">79</text><text x="0" y="0" stroke="#000" stroke-width="0.5">79</text></g>
<g transform="translate(406.00,195.50) scale(0.92,1)"><text x="0" y="0">121</text><text x="0" y="0" stroke="#000" stroke-width="0.5">121</text></g>
<g transform="translate(413.70,245.80) scale(0.92,1)"><text x="0" y="0">50</text><text x="0" y="0" stroke="#000" stroke-width="0.5">50</text></g>
<g transform="translate(445.70,163.00) scale(0.92,1)"><text x="0" y="0">170</text><text x="0" y="0" stroke="#000" stroke-width="0.5">170</text></g>
<g transform="translate(434.30,139.90) scale(0.92,1)"><text x="0" y="0">44</text><text x="0" y="0" stroke="#000" stroke-width="0.5">44</text></g>
<g transform="translate(450.00,134.10) scale(0.92,1)"><text x="0" y="0">59</text><text x="0" y="0" stroke="#000" stroke-width="0.5">59</text></g>
<g transform="translate(414.70,115.80) scale(0.92,1)"><text x="0" y="0">33</text><text x="0" y="0" stroke="#000" stroke-width="0.5">33</text></g>
</g>
</svg></div>
<div style="position:absolute;left:315.0px;top:53.0px;width:119.0px;height:103.0px;background:#fff;border-radius:8px;box-shadow:0 1px 3px rgba(0,0,0,0.35)"></div>
<div style="position:absolute;left:342.6px;top:156px;width:16px;height:8px;overflow:hidden"><div style="position:absolute;left:3.75px;top:-4.25px;width:8.5px;height:8.5px;background:#fff;transform:rotate(45deg);box-shadow:1px 1px 2px rgba(0,0,0,0.3)"></div></div>
<div style="position:absolute;left:314.0px;top:63.61px;width:120px;text-align:center;font-size:10.50px;line-height:10.50px;font-weight:normal;color:#333;white-space:nowrap;">Bishkek</div>
<div style="position:absolute;left:314.0px;top:75.61px;width:120px;text-align:center;font-size:10.50px;line-height:10.50px;font-weight:normal;color:#333;white-space:nowrap;">2022-03-01 6:00 PM</div>
<div style="position:absolute;left:314.0px;top:87.11px;width:120px;text-align:center;font-size:10.50px;line-height:10.50px;font-weight:normal;color:#333;white-space:nowrap;">(LT)</div>
<div style="position:absolute;left:326.0px;top:99.0px;width:97.0px;height:45.5px;background:#fff;border:1px solid #0b3d73;box-sizing:border-box"></div>
<div style="position:absolute;left:326.0px;top:99.0px;width:97.0px;height:21.5px;background:#044e82"></div>
<div style="position:absolute;left:387.0px;top:120.5px;width:36.0px;height:24.0px;background:#ffff00;border-left:1px solid #0b3d73;border-right:1px solid #0b3d73;border-bottom:1px solid #0b3d73;box-sizing:border-box"></div>
<div style="position:absolute;left:317.0px;top:104.87px;width:80px;text-align:center;font-size:10.20px;line-height:10.20px;font-weight:bold;color:#fff;white-space:nowrap;">Pollutant</div>
<div style="position:absolute;left:385.0px;top:104.87px;width:40px;text-align:center;font-size:10.20px;line-height:10.20px;font-weight:bold;color:#fff;white-space:nowrap;">AQI</div>
<div style="position:absolute;left:317.0px;top:127.11px;width:80px;text-align:center;font-size:10.50px;line-height:10.50px;font-weight:normal;color:#333;white-space:nowrap;">PM2.5</div>
<div style="position:absolute;left:385.0px;top:127.11px;width:40px;text-align:center;font-size:10.50px;line-height:10.50px;font-weight:normal;color:#222;white-space:nowrap;">91</div>
<div style="position:absolute;left:552.0px;top:2.0px;width:248.0px;height:27.0px;background:#044e82"></div>
<div style="position:absolute;left:556.0px;top:11.04px;font-size:10.00px;line-height:10.00px;font-weight:bold;color:#fff;white-space:nowrap;">Select a City</div>
<div style="position:absolute;left:552.0px;top:31.0px;width:249.0px;height:26.0px;background:#fff;border:1px solid #c8c8c8;border-radius:3px;box-sizing:border-box"></div>
<div style="position:absolute;left:560.0px;top:38.11px;font-size:10.50px;line-height:10.50px;font-weight:normal;color:#333;white-space:nowrap;">Bishkek</div>
<svg style="position:absolute;left:772.5px;top:38.8px" width="7" height="7" viewBox="0 0 7 7"><path d="M0.6 0.6 L6.4 6.4 M6.4 0.6 L0.6 6.4" stroke="#8a8a8a" stroke-width="1.1"/></svg>
<div style="position:absolute;left:785.2px;top:40.8px;width:0;height:0;border-left:3.3px solid transparent;border-right:3.3px solid transparent;border-top:3.6px solid #888"></div>
<div style="position:absolute;left:552.0px;top:72.0px;width:248.0px;height:28.0px;background:#044e82"></div>
<div style="position:absolute;left:556.0px;top:81.53px;font-size:10.00px;line-height:10.00px;font-weight:bold;color:#fff;white-space:nowrap;">Select a Parameter</div>
<div style="position:absolute;left:552.0px;top:101.0px;width:249.0px;height:26.0px;background:#fff;border:1px solid #c8c8c8;border-radius:3px;box-sizing:border-box"></div>
<div style="position:absolute;left:559.5px;top:109.11px;font-size:10.50px;line-height:10.50px;font-weight:normal;color:#333;white-space:nowrap;">PM2.5</div>
<svg style="position:absolute;left:772.5px;top:109.8px" width="7" height="7" viewBox="0 0 7 7"><path d="M0.6 0.6 L6.4 6.4 M6.4 0.6 L0.6 6.4" stroke="#8a8a8a" stroke-width="1.1"/></svg>
<div style="position:absolute;left:785.2px;top:111.8px;width:0;height:0;border-left:3.3px solid transparent;border-right:3.3px solid transparent;border-top:3.6px solid #888"></div>
<div style="position:absolute;left:551.0px;top:143.0px;width:250.0px;height:55.0px;background:#fff;border:1px solid #ccc;box-sizing:border-box"></div>
<div style="position:absolute;left:560.0px;top:151.81px;font-size:10.50px;line-height:10.50px;font-weight:bold;color:#333;white-space:nowrap;">Bishkek</div>
<svg style="position:absolute;left:766px;top:162px" width="26" height="26" viewBox="0 0 26 26"><rect width="26" height="26" rx="2" fill="#f0b13c"/>
<circle cx="6.5" cy="19.5" r="2.6" fill="#fff"/>
<path d="M4 10.5 A11.5 11.5 0 0 1 15.5 22" stroke="#fff" stroke-width="3.2" fill="none"/>
<path d="M4 4.5 A17.5 17.5 0 0 1 21.5 22" stroke="#fff" stroke-width="3.2" fill="none"/></svg>
<div style="position:absolute;left:551.0px;top:210.32px;font-size:8.25px;line-height:8.25px;font-weight:normal;color:#555;white-space:nowrap;">Note: Values above 500 are considered Beyond the AQI. Follow</div>
<div style="position:absolute;left:551.0px;top:225.32px;font-size:8.25px;line-height:8.25px;font-weight:normal;color:#555;white-space:nowrap;">recommendations for the Hazardous category. Additional</div>
<div style="position:absolute;left:551.0px;top:240.32px;font-size:8.25px;line-height:8.25px;font-weight:normal;color:#555;white-space:nowrap;">information on reducing exposure to extremely high levels of particle</div>
<div style="position:absolute;left:551.0px;top:255.32px;font-size:8.25px;line-height:8.25px;font-weight:normal;color:#555;white-space:nowrap;">pollution is available <span style="color:#1a3a6a;font-weight:bold;text-decoration:underline">here</span>.</div>
<div style="position:absolute;left:6.0px;top:354.0px;width:81.0px;height:22.5px;background:#fff;border:1px solid #aaa;border-top:2px solid #0b3d73;border-bottom:none;border-radius:4px 4px 0 0;box-sizing:border-box"></div>
<div style="position:absolute;left:6.5px;top:362.54px;width:80px;text-align:center;font-size:10.00px;line-height:10.00px;font-weight:normal;color:#333;white-space:nowrap;">AQI</div>
<div style="position:absolute;left:89.0px;top:354.0px;width:125.0px;height:22.0px;background:#d5d5d5;border-radius:4px 4px 0 0"></div>
<div style="position:absolute;left:89.0px;top:362.11px;width:125px;text-align:center;font-size:10.50px;line-height:10.50px;font-weight:normal;color:#666;white-space:nowrap;">Concentration</div>
<div style="position:absolute;left:216.0px;top:354.0px;width:104.0px;height:22.0px;background:#d5d5d5;border-radius:4px 4px 0 0"></div>
<div style="position:absolute;left:216.0px;top:362.11px;width:104px;text-align:center;font-size:10.50px;line-height:10.50px;font-weight:normal;color:#666;white-space:nowrap;">Historical</div>
<div style="position:absolute;left:6.0px;top:376.0px;width:795.0px;height:1.2px;background:#a8a8a8"></div>
<div style="position:absolute;left:7.0px;top:387.11px;font-size:10.50px;line-height:10.50px;font-weight:normal;color:#333;white-space:nowrap;">Learn more about how the Air Quality Index [AQI] is calculated from the EPA <span style="color:#1a3a6a;text-decoration:underline">here</span>.</div>
<div style="position:absolute;left:6.0px;top:414.0px;width:597.0px;height:295.0px;background:#fff"></div>
<div style="position:absolute;left:153.5px;top:421.57px;width:300px;text-align:center;font-size:13.50px;line-height:13.50px;font-weight:normal;color:#333;white-space:nowrap;letter-spacing:0.38px">Bishkek &#8211; PM2.5</div>
<div style="position:absolute;left:62.0px;top:571.0px;width:532.2px;height:1.0px;background:#e6e6e6"></div>
<div style="position:absolute;left:51.0px;top:564.82px;font-size:9.50px;line-height:9.50px;font-weight:normal;color:#333;white-space:nowrap;width:0;direction:rtl">100</div>
<div style="position:absolute;left:62.0px;top:543.4px;width:532.2px;height:1.0px;background:#e6e6e6"></div>
<div style="position:absolute;left:51.0px;top:537.28px;font-size:9.50px;line-height:9.50px;font-weight:normal;color:#333;white-space:nowrap;width:0;direction:rtl">200</div>
<div style="position:absolute;left:62.0px;top:515.9px;width:532.2px;height:1.0px;background:#e6e6e6"></div>
<div style="position:absolute;left:51.0px;top:509.74px;font-size:9.50px;line-height:9.50px;font-weight:normal;color:#333;white-space:nowrap;width:0;direction:rtl">300</div>
<div style="position:absolute;left:62.0px;top:488.3px;width:532.2px;height:1.0px;background:#e6e6e6"></div>
<div style="position:absolute;left:51.0px;top:482.20px;font-size:9.50px;line-height:9.50px;font-weight:normal;color:#333;white-space:nowrap;width:0;direction:rtl">400</div>
<div style="position:absolute;left:62.0px;top:460.8px;width:532.2px;height:1.0px;background:#e6e6e6"></div>
<div style="position:absolute;left:51.0px;top:454.66px;font-size:9.50px;line-height:9.50px;font-weight:normal;color:#333;white-space:nowrap;width:0;direction:rtl">500</div>
<div style="position:absolute;left:51.0px;top:592.36px;font-size:9.50px;line-height:9.50px;font-weight:normal;color:#333;white-space:nowrap;width:0;direction:rtl">0</div>
<div style="position:absolute;left:62.0px;top:598.5px;width:532.2px;height:1.2px;background:#ccd6eb"></div>
<div style="position:absolute;left:66.9px;top:573.4px;width:12.4px;height:25.6px;background:#ffff00;border:1px solid #333;border-bottom:none;box-sizing:border-box"></div>
<div style="position:absolute;left:61.5px;top:599.0px;width:1.0px;height:5.0px;background:#ccd6eb"></div>
<div style="position:absolute;left:-80.0px;top:606.5px;transform-origin:100% 0;transform:rotate(-45deg);font-size:9px;line-height:10px;color:#666;white-space:nowrap;text-align:right;width:150px;letter-spacing:0.2px">7 PM</div>
<div style="position:absolute;left:89.1px;top:565.7px;width:12.4px;height:33.3px;background:#ff7e00;border:1px solid #333;border-bottom:none;box-sizing:border-box"></div>
<div style="position:absolute;left:83.7px;top:599.0px;width:1.0px;height:5.0px;background:#ccd6eb"></div>
<div style="position:absolute;left:-57.8px;top:606.5px;transform-origin:100% 0;transform:rotate(-45deg);font-size:9px;line-height:10px;color:#666;white-space:nowrap;text-align:right;width:150px;letter-spacing:0.2px">8 PM</div>
<div style="position:absolute;left:111.2px;top:555.8px;width:12.4px;height:43.2px;background:#ff0000;border:1px solid #333;border-bottom:none;box-sizing:border-box"></div>
<div style="position:absolute;left:105.8px;top:599.0px;width:1.0px;height:5.0px;background:#ccd6eb"></div>
<div style="position:absolute;left:-35.7px;top:606.5px;transform-origin:100% 0;transform:rotate(-45deg);font-size:9px;line-height:10px;color:#666;white-space:nowrap;text-align:right;width:150px;letter-spacing:0.2px">9 PM</div>
<div style="position:absolute;left:133.4px;top:555.8px;width:12.4px;height:43.2px;background:#ff0000;border:1px solid #333;border-bottom:none;box-sizing:border-box"></div>
<div style="position:absolute;left:128.0px;top:599.0px;width:1.0px;height:5.0px;background:#ccd6eb"></div>
<div style="position:absolute;left:-13.5px;top:606.5px;transform-origin:100% 0;transform:rotate(-45deg);font-size:9px;line-height:10px;color:#666;white-space:nowrap;text-align:right;width:150px;letter-spacing:0.2px">10 PM</div>
<div style="position:absolute;left:155.6px;top:555.8px;width:12.4px;height:43.2px;background:#ff0000;border:1px solid #333;border-bottom:none;box-sizing:border-box"></div>
<div style="position:absolute;left:150.2px;top:599.0px;width:1.0px;height:5.0px;background:#ccd6eb"></div>
<div style="position:absolute;left:8.7px;top:606.5px;transform-origin:100% 0;transform:rotate(-45deg);font-size:9px;line-height:10px;color:#666;white-space:nowrap;text-align:right;width:150px;letter-spacing:0.2px">11 PM</div>
<div style="position:absolute;left:177.8px;top:551.4px;width:12.4px;height:47.6px;background:#ff0000;border:1px solid #333;border-bottom:none;box-sizing:border-box"></div>
<div style="position:absolute;left:172.4px;top:599.0px;width:1.0px;height:5.0px;background:#ccd6eb"></div>
<div style="position:absolute;left:30.9px;top:606.5px;transform-origin:100% 0;transform:rotate(-45deg);font-size:9px;line-height:10px;color:#666;white-space:nowrap;text-align:right;width:150px;letter-spacing:0.2px">Mar 01, 2022 12 AM</div>
<div style="position:absolute;left:199.9px;top:553.0px;width:12.4px;height:46.0px;background:#ff0000;border:1px solid #333;border-bottom:none;box-sizing:border-box"></div>
<div style="position:absolute;left:194.6px;top:599.0px;width:1.0px;height:5.0px;background:#ccd6eb"></div>
<div style="position:absolute;left:53.0px;top:606.5px;transform-origin:100% 0;transform:rotate(-45deg);font-size:9px;line-height:10px;color:#666;white-space:nowrap;text-align:right;width:150px;letter-spacing:0.2px">1 AM</div>
<div style="position:absolute;left:222.1px;top:554.4px;width:12.4px;height:44.6px;background:#ff0000;border:1px solid #333;border-bottom:none;box-sizing:border-box"></div>
<div style="position:absolute;left:216.7px;top:599.0px;width:1.0px;height:5.0px;background:#ccd6eb"></div>
<div style="position:absolute;left:75.2px;top:606.5px;transform-origin:100% 0;transform:rotate(-45deg);font-size:9px;line-height:10px;color:#666;white-space:nowrap;text-align:right;width:150px;letter-spacing:0.2px">2 AM</div>
<div style="position:absolute;left:244.3px;top:555.8px;width:12.4px;height:43.2px;background:#ff0000;border:1px solid #333;border-bottom:none;box-sizing:border-box"></div>
<div style="position:absolute;left:238.9px;top:599.0px;width:1.0px;height:5.0px;background:#ccd6eb"></div>
<div style="position:absolute;left:97.4px;top:606.5px;transform-origin:100% 0;transform:rotate(-45deg);font-size:9px;line-height:10px;color:#666;white-space:nowrap;text-align:right;width:150px;letter-spacing:0.2px">3 AM</div>
<div style="position:absolute;left:266.5px;top:557.7px;width:12.4px;height:41.3px;background:#ff7e00;border:1px solid #333;border-bottom:none;box-sizing:border-box"></div>
<div style="position:absolute;left:261.1px;top:599.0px;width:1.0px;height:5.0px;background:#ccd6eb"></div>
<div style="position:absolute;left:119.6px;top:606.5px;transform-origin:100% 0;transform:rotate(-45deg);font-size:9px;line-height:10px;color:#666;white-space:nowrap;text-align:right;width:150px;letter-spacing:0.2px">4 AM</div>
<div style="position:absolute;left:288.6px;top:562.1px;width:12.4px;height:36.9px;background:#ff7e00;border:1px solid #333;border-bottom:none;box-sizing:border-box"></div>
<div style="position:absolute;left:283.2px;top:599.0px;width:1.0px;height:5.0px;background:#ccd6eb"></div>
<div style="position:absolute;left:141.7px;top:606.5px;transform-origin:100% 0;transform:rotate(-45deg);font-size:9px;line-height:10px;color:#666;white-space:nowrap;text-align:right;width:150px;letter-spacing:0.2px">5 AM</div>
<div style="position:absolute;left:310.8px;top:567.1px;width:12.4px;height:31.9px;background:#ff7e00;border:1px solid #333;border-bottom:none;box-sizing:border-box"></div>
<div style="position:absolute;left:305.4px;top:599.0px;width:1.0px;height:5.0px;background:#ccd6eb"></div>
<div style="position:absolute;left:163.9px;top:606.5px;transform-origin:100% 0;transform:rotate(-45deg);font-size:9px;line-height:10px;color:#666;white-space:nowrap;text-align:right;width:150px;letter-spacing:0.2px">6 AM</div>
<div style="position:absolute;left:333.0px;top:572.0px;width:12.4px;height:27.0px;background:#ffff00;border:1px solid #333;border-bottom:none;box-sizing:border-box"></div>
<div style="position:absolute;left:327.6px;top:599.0px;width:1.0px;height:5.0px;background:#ccd6eb"></div>
<div style="position:absolute;left:186.1px;top:606.5px;transform-origin:100% 0;transform:rotate(-45deg);font-size:9px;line-height:10px;color:#666;white-space:nowrap;text-align:right;width:150px;letter-spacing:0.2px">7 AM</div>
<div style="position:absolute;left:355.2px;top:571.5px;width:12.4px;height:27.5px;background:#ffff00;border:1px solid #333;border-bottom:none;box-sizing:border-box"></div>
<div style="position:absolute;left:349.8px;top:599.0px;width:1.0px;height:5.0px;background:#ccd6eb"></div>
<div style="position:absolute;left:208.3px;top:606.5px;transform-origin:100% 0;transform:rotate(-45deg);font-size:9px;line-height:10px;color:#666;white-space:nowrap;text-align:right;width:150px;letter-spacing:0.2px">8 AM</div>
<div style="position:absolute;left:377.3px;top:568.2px;width:12.4px;height:30.8px;background:#ff7e00;border:1px solid #333;border-bottom:none;box-sizing:border-box"></div>
<div style="position:absolute;left:371.9px;top:599.0px;width:1.0px;height:5.0px;background:#ccd6eb"></div>
<div style="position:absolute;left:230.4px;top:606.5px;transform-origin:100% 0;transform:rotate(-45deg);font-size:9px;line-height:10px;color:#666;white-space:nowrap;text-align:right;width:150px;letter-spacing:0.2px">9 AM</div>
<div style="position:absolute;left:399.5px;top:565.1px;width:12.4px;height:33.9px;background:#ff7e00;border:1px solid #333;border-bottom:none;box-sizing:border-box"></div>
<div style="position:absolute;left:394.1px;top:599.0px;width:1.0px;height:5.0px;background:#ccd6eb"></div>
<div style="position:absolute;left:252.6px;top:606.5px;transform-origin:100% 0;transform:rotate(-45deg);font-size:9px;line-height:10px;color:#666;white-space:nowrap;text-align:right;width:150px;letter-spacing:0.2px">10 AM</div>
<div style="position:absolute;left:421.7px;top:565.7px;width:12.4px;height:33.3px;background:#ff7e00;border:1px solid #333;border-bottom:none;box-sizing:border-box"></div>
<div style="position:absolute;left:416.3px;top:599.0px;width:1.0px;height:5.0px;background:#ccd6eb"></div>
<div style="position:absolute;left:274.8px;top:606.5px;transform-origin:100% 0;transform:rotate(-45deg);font-size:9px;line-height:10px;color:#666;white-space:nowrap;text-align:right;width:150px;letter-spacing:0.2px">11 AM</div>
<div style="position:absolute;left:443.9px;top:556.6px;width:12.4px;height:42.4px;background:#ff0000;border:1px solid #333;border-bottom:none;box-sizing:border-box"></div>
<div style="position:absolute;left:438.5px;top:599.0px;width:1.0px;height:5.0px;background:#ccd6eb"></div>
<div style="position:absolute;left:297.0px;top:606.5px;transform-origin:100% 0;transform:rotate(-45deg);font-size:9px;line-height:10px;color:#666;white-space:nowrap;text-align:right;width:150px;letter-spacing:0.2px">12 PM</div>
<div style="position:absolute;left:466.0px;top:560.4px;width:12.4px;height:38.6px;background:#ff7e00;border:1px solid #333;border-bottom:none;box-sizing:border-box"></div>
<div style="position:absolute;left:460.7px;top:599.0px;width:1.0px;height:5.0px;background:#ccd6eb"></div>
<div style="position:absolute;left:319.1px;top:606.5px;transform-origin:100% 0;transform:rotate(-45deg);font-size:9px;line-height:10px;color:#666;white-space:nowrap;text-align:right;width:150px;letter-spacing:0.2px">1 PM</div>
<div style="position:absolute;left:488.2px;top:557.4px;width:12.4px;height:41.6px;background:#ff0000;border:1px solid #333;border-bottom:none;box-sizing:border-box"></div>
<div style="position:absolute;left:482.8px;top:599.0px;width:1.0px;height:5.0px;background:#ccd6eb"></div>
<div style="position:absolute;left:341.3px;top:606.5px;transform-origin:100% 0;transform:rotate(-45deg);font-size:9px;line-height:10px;color:#666;white-space:nowrap;text-align:right;width:150px;letter-spacing:0.2px">2 PM</div>
<div style="position:absolute;left:510.4px;top:564.0px;width:12.4px;height:35.0px;background:#ff7e00;border:1px solid #333;border-bottom:none;box-sizing:border-box"></div>
<div style="position:absolute;left:505.0px;top:599.0px;width:1.0px;height:5.0px;background:#ccd6eb"></div>
<div style="position:absolute;left:363.5px;top:606.5px;transform-origin:100% 0;transform:rotate(-45deg);font-size:9px;line-height:10px;color:#666;white-space:nowrap;text-align:right;width:150px;letter-spacing:0.2px">3 PM</div>
<div style="position:absolute;left:532.6px;top:567.3px;width:12.4px;height:31.7px;background:#ff7e00;border:1px solid #333;border-bottom:none;box-sizing:border-box"></div>
<div style="position:absolute;left:527.2px;top:599.0px;width:1.0px;height:5.0px;background:#ccd6eb"></div>
<div style="position:absolute;left:385.7px;top:606.5px;transform-origin:100% 0;transform:rotate(-45deg);font-size:9px;line-height:10px;color:#666;white-space:nowrap;text-align:right;width:150px;letter-spacing:0.2px">4 PM</div>
<div style="position:absolute;left:554.7px;top:570.4px;width:12.4px;height:28.6px;background:#ff7e00;border:1px solid #333;border-bottom:none;box-sizing:border-box"></div>
<div style="position:absolute;left:549.4px;top:599.0px;width:1.0px;height:5.0px;background:#ccd6eb"></div>
<div style="position:absolute;left:407.8px;top:606.5px;transform-origin:100% 0;transform:rotate(-45deg);font-size:9px;line-height:10px;color:#666;white-space:nowrap;text-align:right;width:150px;letter-spacing:0.2px">5 PM</div>
<div style="position:absolute;left:576.9px;top:573.9px;width:12.4px;height:25.1px;background:#ffff00;border:1px solid #333;border-bottom:none;box-sizing:border-box"></div>
<div style="position:absolute;left:571.5px;top:599.0px;width:1.0px;height:5.0px;background:#ccd6eb"></div>
<div style="position:absolute;left:430.0px;top:606.5px;transform-origin:100% 0;transform:rotate(-45deg);font-size:9px;line-height:10px;color:#666;white-space:nowrap;text-align:right;width:150px;letter-spacing:0.2px">6 PM</div>
<div style="position:absolute;left:593.7px;top:599.0px;width:1.0px;height:5.0px;background:#ccd6eb"></div>
<div style="position:absolute;left:10px;top:521px;width:30px;text-align:center;transform:rotate(-90deg);font-size:9.5px;line-height:12px;color:#333">AQI</div>
<div style="position:absolute;left:287.0px;top:686.6px;width:12.0px;height:9.0px;background:#cbcbcb"></div>
<div style="position:absolute;left:302.5px;top:686.70px;font-size:9.80px;line-height:9.80px;font-weight:normal;color:#222;white-space:nowrap;-webkit-text-stroke:0.25px #222">AQI</div>
<div style="position:absolute;left:613.0px;top:415.0px;width:188.0px;height:289.0px;background:#eee;border:1px solid #0b3d73;box-sizing:border-box"></div>
<div style="position:absolute;left:613.0px;top:415.0px;width:188.0px;height:57.0px;background:#044e82"></div>
<div style="position:absolute;left:613.0px;top:422.12px;width:188px;text-align:center;font-size:11.20px;line-height:11.20px;font-weight:bold;color:#fff;white-space:nowrap;">Current Conditions</div>
<div style="position:absolute;left:613.0px;top:439.10px;width:188px;text-align:center;font-size:9.10px;line-height:9.10px;font-weight:bold;color:#fff;white-space:nowrap;">observed at</div>
<div style="position:absolute;left:613.0px;top:453.83px;width:188px;text-align:center;font-size:11.30px;line-height:11.30px;font-weight:bold;color:#fff;white-space:nowrap;">Mar 1, 2022 6:00 PM (LT)</div>
<div style="position:absolute;left:614.0px;top:472.0px;width:186.0px;height:87.5px;background:#ffff00"></div>
<div style="position:absolute;left:613.0px;top:486.80px;width:188px;text-align:center;font-size:15.00px;line-height:15.00px;font-weight:bold;color:#111;white-space:nowrap;">91 AQI</div>
<div style="position:absolute;left:613.0px;top:508.30px;width:188px;text-align:center;font-size:15.00px;line-height:15.00px;font-weight:bold;color:#111;white-space:nowrap;">Moderate</div>
<div style="position:absolute;left:613.0px;top:528.90px;width:188px;text-align:center;font-size:15.00px;line-height:15.00px;font-weight:bold;color:#111;white-space:nowrap;">PM2.5</div>
<div style="position:absolute;left:613.0px;top:568.05px;width:188px;text-align:center;font-size:8.80px;line-height:8.80px;font-weight:bold;color:#333;white-space:nowrap;">Health Message</div>
<div style="position:absolute;left:618.0px;top:588.18px;font-size:9.00px;line-height:9.00px;font-weight:normal;color:#282828;white-space:nowrap;">The AQI is between 51 and 100. Air quality</div>
<div style="position:absolute;left:618.0px;top:604.20px;font-size:9.00px;line-height:9.00px;font-weight:normal;color:#282828;white-space:nowrap;">is acceptable; however, pollution in this</div>
<div style="position:absolute;left:618.0px;top:620.22px;font-size:9.00px;line-height:9.00px;font-weight:normal;color:#282828;white-space:nowrap;">range may pose a moderate health concern</div>
<div style="position:absolute;left:618.0px;top:636.24px;font-size:9.00px;line-height:9.00px;font-weight:normal;color:#282828;white-space:nowrap;">for a very small number of individuals.</div>
<div style="position:absolute;left:618.0px;top:652.26px;font-size:9.00px;line-height:9.00px;font-weight:normal;color:#282828;white-space:nowrap;">People who are unusually sensitive to ozone</div>
<div style="position:absolute;left:618.0px;top:668.28px;font-size:9.00px;line-height:9.00px;font-weight:normal;color:#282828;white-space:nowrap;">or particle pollution may experience</div>
<div style="position:absolute;left:618.0px;top:684.30px;font-size:9.00px;line-height:9.00px;font-weight:normal;color:#282828;white-space:nowrap;">respiratory symptoms.</div>
</body></html>
